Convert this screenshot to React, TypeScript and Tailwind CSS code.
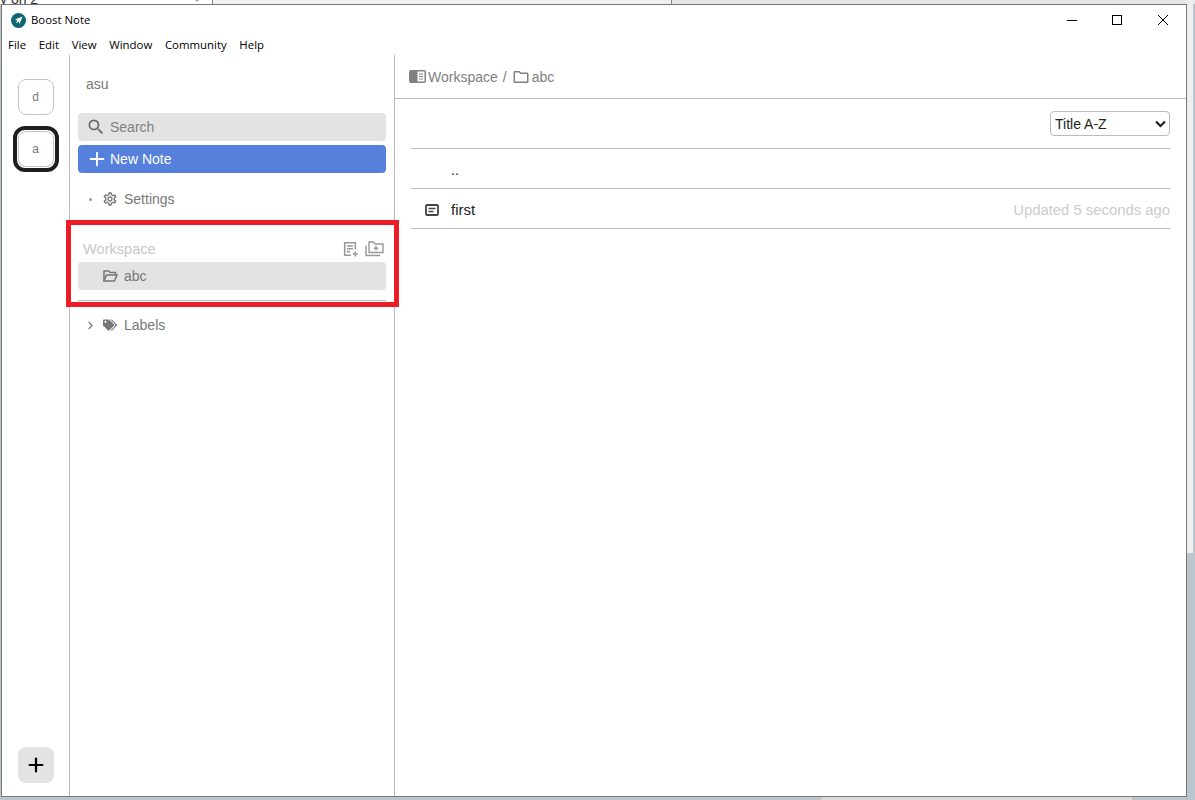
import { ChevronDown, ChevronRight, Plus } from 'lucide-react';
import { FaTags } from 'react-icons/fa';
import { MdOutlineFolder, MdOutlineSettings, MdSearch } from 'react-icons/md';

const menus = ['File', 'Edit', 'View', 'Window', 'Community', 'Help'];

function BoostLogo() {
  return (
    <svg width="15" height="15" viewBox="0 0 15 15">
      <circle cx="7.5" cy="7.5" r="7.5" fill="#0f6673" />
      <path d="M11.5 3.5 L4 6.6 L6.3 7.6 L4.9 10 L7.6 8.7 L8.6 11 Z" fill="#ffffff" />
    </svg>
  );
}

function NoteAddIcon() {
  return (
    <svg width="16" height="16" viewBox="0 0 16 16" fill="none" stroke="#999999" strokeWidth="1.6">
      <path d="M8 14.3H1.7V1.7H12.3V8.5" />
      <path d="M4 5h6M4 7.8h6M4 10.6h3" />
      <path d="M12.3 10.5v5M9.8 13h5" />
    </svg>
  );
}

function FolderAddIcon() {
  return (
    <svg width="19" height="16" viewBox="0 0 19 16" fill="none" stroke="#999999" strokeWidth="1.4">
      <path d="M4 1H8.5L10 3H18V11.5H4Z" />
      <path d="M1 4.5V14.5H15" />
      <path d="M11 5v4.5M8.8 7.2h4.4" />
    </svg>
  );
}

function OpenFolderIcon() {
  return (
    <svg width="15" height="12" viewBox="0 0 15 12" fill="none" stroke="#777777" strokeWidth="1.5">
      <path d="M1 11V1H5.5L7 2.5H12.5V5" />
      <path d="M1 11L3.5 5H14L11.5 11Z" />
    </svg>
  );
}

function WorkspaceIcon() {
  return (
    <svg width="17" height="13" viewBox="0 0 17 13">
      <rect x="0" y="0" width="17" height="13" rx="2" fill="#808080" />
      <rect x="8.5" y="1.5" width="7" height="10" fill="#ffffff" />
      <path d="M10 4h4M10 6.5h4M10 9h4" stroke="#808080" strokeWidth="1.1" />
    </svg>
  );
}

function NoteIcon() {
  return (
    <svg width="14" height="12" viewBox="0 0 14 12" fill="none" stroke="#444444">
      <rect x="1" y="1" width="12" height="10" rx="1" strokeWidth="1.8" />
      <path d="M3.5 4.5h7M3.5 7.5h5" strokeWidth="1.3" />
    </svg>
  );
}

function StorageButton({ letter, active }: { letter: string; active?: boolean }) {
  return (
    <div className={active ? 'w-[46px] h-[46px] border-[4px] border-[#1e1e1e] rounded-xl flex items-center justify-center' : 'w-[46px] h-[46px] flex items-center justify-center'}>
      <div className="w-9 h-9 shrink-0 border border-[#c4c4c4] rounded-lg flex items-center justify-center text-xs text-[#777777]">
        {letter}
      </div>
    </div>
  );
}

export default function App() {
  return (
    <div className="relative w-[1195px] h-[800px] overflow-hidden bg-[#bcc4cc] font-['Liberation_Sans',sans-serif]">
      {/* what is behind the window */}
      <div className="absolute left-0 top-0 w-[212px] h-[4px] overflow-hidden bg-white">
        <span className="absolute left-0 top-[-11px] text-sm text-[#333333]">y on 2</span>
        <ChevronDown size={10} className="absolute left-[192px] top-[-5px]" color="#666666" />
      </div>
      <div className="absolute left-[212px] top-0 w-[460px] h-[4px] bg-[#f0f0f0] border-l border-r border-[#888888]" />
      <div className="absolute left-[672px] top-0 w-[523px] h-[4px] bg-[#e4e6e8]" />
      <div className="absolute left-[1187px] top-0 w-[6px] h-[553px] bg-[#eeeeee]" />
      <div className="absolute left-[821px] top-[797px] w-[311px] h-[3px] bg-[#dadada]" />

      <div className="absolute left-px top-[4px] w-[1186px] h-[793px] bg-white border border-[#777777] flex flex-col">
        {/* title bar */}
        <div className="h-[26px] shrink-0 flex items-center pl-[9px] pt-[4px]">
          <BoostLogo />
          <span className="ml-[5px] text-[11.4px] text-black font-['Open_Sans',sans-serif]">Boost Note</span>
          <div className="ml-auto flex items-center pr-[18px]">
            <div className="w-[10px] h-px bg-black" />
            <div className="ml-[35px] w-[10px] h-[10px] border border-black" />
            <svg className="ml-[36px]" width="10" height="10" viewBox="0 0 10 10" stroke="#000000" strokeWidth="1">
              <path d="M0 0L10 10M10 0L0 10" />
            </svg>
          </div>
        </div>
        {/* menu bar */}
        <div className="h-6 shrink-0 flex items-center gap-[12.7px] pl-[6px] pt-[4px] text-[11.4px] text-black font-['Open_Sans',sans-serif]">
          {menus.map((m) => (
            <span key={m}>{m}</span>
          ))}
        </div>

        <div className="flex-1 flex min-h-0">
          {/* storage rail */}
          <div className="w-[68px] shrink-0 border-r border-[#bbbbbb] flex flex-col items-center gap-[6px] pt-[19px] pb-[13px]">
            <StorageButton letter="d" />
            <StorageButton letter="a" active />
            <div className="mt-auto w-9 h-9 rounded-lg bg-[#e3e3e3] flex items-center justify-center">
              <Plus size={22} strokeWidth={2.4} color="#000000" />
            </div>
          </div>

          {/* sidebar */}
          <div className="w-[325px] shrink-0 border-r border-[#bbbbbb] flex flex-col px-2 text-sm text-[#777777]">
            <div className="h-[58px] shrink-0 flex items-center pl-2">asu</div>
            <div className="h-7 shrink-0 bg-[#e3e3e3] rounded-sm flex items-center pl-[8px] gap-[4px]">
              <MdSearch size={20} color="#666666" />
              <span className="text-[#808080]">Search</span>
            </div>
            <div className="h-7 mt-1 shrink-0 bg-[#5580dc] rounded-sm flex items-center pl-[8px] gap-[2px] text-white">
              <Plus size={22} strokeWidth={2} />
              <span>New Note</span>
            </div>
            <div className="h-7 mt-[12px] shrink-0 flex items-center pl-[11px]">
              <div className="w-[3px] h-[3px] rounded-full bg-[#999999]" />
              <MdOutlineSettings size={16} className="ml-[10px]" />
              <span className="ml-[6px]">Settings</span>
            </div>
            <div className="h-7 mt-[21px] pt-[2px] shrink-0 flex items-center pl-[5px] pr-[2px]">
              <span className="text-[14.6px] text-[#c8c8c8]">Workspace</span>
              <div className="ml-auto flex items-center gap-[6px]">
                <NoteAddIcon />
                <FolderAddIcon />
              </div>
            </div>
            <div className="h-7 shrink-0 bg-[#e3e3e3] rounded-sm flex items-center pl-[25px] gap-[6px]">
              <OpenFolderIcon />
              <span>abc</span>
            </div>
            <div className="mt-[10px] h-px shrink-0 bg-[#bbbbbb]" />
            <div className="h-7 mt-[10px] shrink-0 flex items-center pl-[6px]">
              <ChevronRight size={13} strokeWidth={2} />
              <FaTags size={14} className="ml-[6px]" />
              <span className="ml-[7px]">Labels</span>
            </div>
          </div>

          {/* main */}
          <div className="flex-1 min-w-0 flex flex-col text-sm">
            <div className="h-[44px] shrink-0 border-b border-[#bbbbbb] flex items-center pl-[14px] text-[#808080]">
              <WorkspaceIcon />
              <span className="ml-[2px]">Workspace</span>
              <span className="ml-[5px]">/</span>
              <MdOutlineFolder size={18} className="ml-[5px]" />
              <span className="ml-[2px]">abc</span>
            </div>
            <div className="px-4">
              <div className="h-[50px] border-b border-[#bbbbbb] flex items-center justify-end">
                <div className="w-[120px] h-[25px] border border-[#bbbbbb] rounded-sm flex items-center pl-[4px] pr-[3px] text-[#222222]">
                  <span>Title A-Z</span>
                  <svg className="ml-auto" width="11" height="8" viewBox="0 0 11 8" fill="none" stroke="#222222" strokeWidth="2.2">
                    <path d="M1 1.5L5.5 6L10 1.5" />
                  </svg>
                </div>
              </div>
              <div className="h-10 border-b border-[#bbbbbb] flex items-center pl-10 pt-[2px] text-[#222222]">..</div>
              <div className="h-10 border-b border-[#bbbbbb] flex items-center pt-[2px] text-[15px] text-[#222222]">
                <div className="w-10 pl-[14px]">
                  <NoteIcon />
                </div>
                <span>first</span>
                <span className="ml-auto pt-[2px] text-[14.85px] text-[#cccccc]">Updated 5 seconds ago</span>
              </div>
            </div>
          </div>
        </div>
      </div>

      {/* red annotation box */}
      <div className="absolute left-[66px] top-[220px] w-[333px] h-[87px] border-[5px] border-[#ee1c25]" />
    </div>
  );
}
